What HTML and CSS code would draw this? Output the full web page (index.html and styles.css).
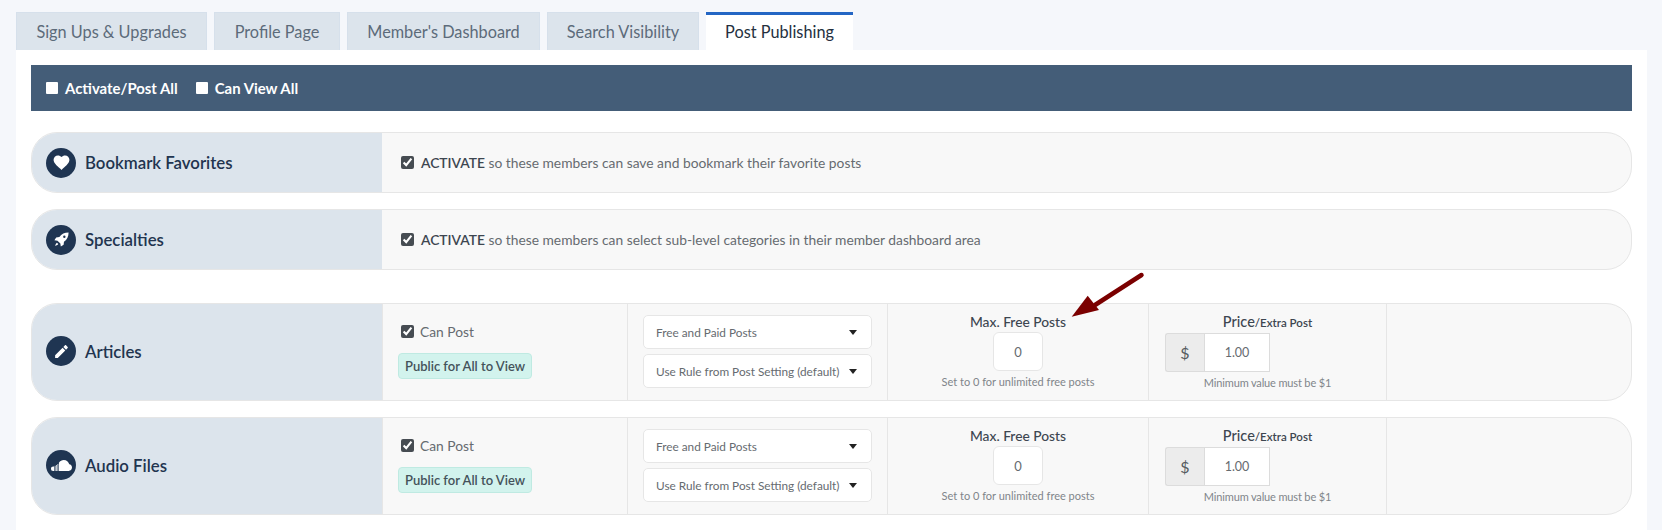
FILE: index.html
```html
<!DOCTYPE html>
<html lang="en">
<head>
<meta charset="utf-8">
<title>Post Publishing</title>
<link rel="stylesheet" href="styles.css">
</head>
<body>
<nav class="tabs">
  <a class="tab">Sign Ups &amp; Upgrades</a>
  <a class="tab">Profile Page</a>
  <a class="tab">Member's Dashboard</a>
  <a class="tab">Search Visibility</a>
  <a class="tab tab-active">Post Publishing</a>
</nav>
<main class="panel">
  <div class="bulk">
    <label class="bulk-item"><input type="checkbox" class="bulk-check">Activate/Post All</label>
    <label class="bulk-item"><input type="checkbox" class="bulk-check">Can View All</label>
  </div>

  <section class="row row-simple">
    <div class="row-head">
      <span class="circle"><svg viewBox="0 0 24 24" class="ico ico-heart"><path d="M12 21.35l-1.45-1.32C5.4 15.36 2 12.28 2 8.5 2 5.42 4.42 3 7.5 3c1.74 0 3.41.81 4.5 2.09C13.09 3.81 14.76 3 16.5 3 19.58 3 22 5.42 22 8.5c0 3.78-3.4 6.86-8.55 11.54L12 21.35z"/></svg></span>
      <h3 class="row-title">Bookmark Favorites</h3>
    </div>
    <label class="activate"><input type="checkbox" class="check" checked><span><b class="activate-word">ACTIVATE</b> so these members can save and bookmark their favorite posts</span></label>
  </section>

  <section class="row row-simple row-last">
    <div class="row-head">
      <span class="circle"><svg viewBox="0 0 24 24" class="ico"><path fill-rule="evenodd" d="M22 2c-5.500 0-10 2-13 6.500L4.500 9 2 13l4.300.6 4.100 4.100.6 4.300 4-2.500.5-4.500C20 12 22 7.500 22 2zM16 6.500a1.700 1.700 0 1 1 0 3.400 1.700 1.700 0 0 1 0-3.400zM5.500 16.500C4 17.500 3.500 19.500 3 21c1.500-.5 3.500-1 4.500-2.500z"/></svg></span>
      <h3 class="row-title">Specialties</h3>
    </div>
    <label class="activate"><input type="checkbox" class="check" checked><span><b class="activate-word">ACTIVATE</b> so these members can select sub-level categories in their member dashboard area</span></label>
  </section>

  <section class="row row-post">
    <div class="row-head">
      <span class="circle"><svg viewBox="0 0 24 24" class="ico"><path d="M3 17.250V21h3.750L17.300 10.450l-3.750-3.750L3 17.250zM20.710 7.040c.39-.39.39-1.020 0-1.410l-2.340-2.340c-.39-.39-1.020-.39-1.410 0l-2.330 2.330 3.750 3.750 2.330-2.330z"/></svg></span>
      <h3 class="row-title">Articles</h3>
    </div>
    <div class="cell cell-post">
      <label class="can-post"><input type="checkbox" class="check" checked>Can Post</label>
      <span class="badge">Public for All to View</span>
    </div>
    <div class="cell cell-selects">
      <div class="select-wrap"><select class="select"><option>Free and Paid Posts</option></select></div>
      <div class="select-wrap"><select class="select"><option>Use Rule from Post Setting (default)</option></select></div>
    </div>
    <div class="cell cell-field">
      <div class="field-label">Max. Free Posts</div>
      <input class="num" value="0">
      <div class="hint">Set to 0 for unlimited free posts</div>
    </div>
    <div class="cell cell-field">
      <div class="field-label field-label-price">Price<small class="field-sub">/Extra Post</small></div>
      <div class="price"><span class="price-addon">$</span><input class="price-input" value="1.00"></div>
      <div class="hint hint-min">Minimum value must be $1</div>
    </div>
    <div class="cell"></div>
  </section>

  <section class="row row-post">
    <div class="row-head">
      <span class="circle"><svg viewBox="0 0 24 24" class="ico ico-cloud"><path d="M3.500 13.500h1v5h-1a2.500 2.500 0 0 1 0-5zM5.200 12.800h.8v5.700h-.8zM6.700 12h.8v6.500h-.8zM8.200 10.900h.8v7.600h-.8zM9.700 9.500C11 7.500 13 6.500 15 6.500c3 0 5.400 2 6 4.800 1.700.2 3 1.700 3 3.500 0 2-1.600 3.700-3.600 3.700H9.700z"/></svg></span>
      <h3 class="row-title">Audio Files</h3>
    </div>
    <div class="cell cell-post">
      <label class="can-post"><input type="checkbox" class="check" checked>Can Post</label>
      <span class="badge">Public for All to View</span>
    </div>
    <div class="cell cell-selects">
      <div class="select-wrap"><select class="select"><option>Free and Paid Posts</option></select></div>
      <div class="select-wrap"><select class="select"><option>Use Rule from Post Setting (default)</option></select></div>
    </div>
    <div class="cell cell-field">
      <div class="field-label">Max. Free Posts</div>
      <input class="num" value="0">
      <div class="hint">Set to 0 for unlimited free posts</div>
    </div>
    <div class="cell cell-field">
      <div class="field-label field-label-price">Price<small class="field-sub">/Extra Post</small></div>
      <div class="price"><span class="price-addon">$</span><input class="price-input" value="1.00"></div>
      <div class="hint hint-min">Minimum value must be $1</div>
    </div>
    <div class="cell"></div>
  </section>
</main>
<svg class="arrow" viewBox="0 0 80 50" width="80" height="50"><path class="arrow-line" d="M72.500 3 L26 33"/><path class="arrow-head" d="M2.700 44.700 L18.700 23.700 L30 38 Z"/></svg>
</body>
</html>
```
FILE: styles.css
```css
* { box-sizing: border-box; }
html, body { margin: 0; padding: 0; }
body {
  background: #f5f7fb;
  font-family: "Lato", "Noto Sans", sans-serif;
  color: #5a5f66;
  padding: 12px 15px 0 16px;
  position: relative;
  height: 530px;
  overflow: hidden;
}
.tabs { display: flex; gap: 7px; height: 38px; }
.tab {
  display: flex; align-items: center; justify-content: center;
  background: #dce4ec;
  border: 1px solid #d6e0eb;
  border-bottom: 0;
  color: #5c6b7a;
  font-size: 16.300px;
  padding: 0 10px;
}
.tab:nth-child(1) { width: 191px; }
.tab:nth-child(2) { width: 126px; }
.tab:nth-child(3) { width: 193px; }
.tab:nth-child(4) { width: 152px; }
.tab-active {
  width: 147px;
  background: #fff;
  border: 0;
  border-top: 3px solid #2466c4;
  color: #24303e;
  padding-bottom: 3px;
}
.panel { background: #fff; padding: 15px 15px 15px; height: 480px; }
.bulk {
  display: flex; align-items: center; gap: 18px;
  background: #445d78;
  height: 46px;
  padding: 0 15px;
}
.bulk-item {
  display: flex; align-items: center;
  color: #fff; font-size: 14.900px; font-weight: 700;
}
.bulk-check {
  appearance: none; margin: 0 7px 0 0;
  width: 12px; height: 12px;
  background: #fff; border-radius: 1px;
}
.row {
  display: grid;
  background: #f8f8f8;
  border: 1px solid #e6e6e6;
  border-radius: 26px;
  overflow: hidden;
  margin-bottom: 16px;
}
.bulk + .row { margin-top: 21px; }
.row-simple { grid-template-columns: 350px 1fr; height: 61px; }
.row-last { margin-bottom: 33px; }
.row-post { grid-template-columns: 350px 245px 260px 261px 238px 1fr; height: 98px; }
.row-post .row-head { padding-bottom: 2px; }
.row-head {
  display: flex; align-items: center; gap: 9px;
  background: #dce4ec;
  padding-left: 15px;
  margin: -1px 0 -1px -1px;
}
.circle {
  display: flex; align-items: center; justify-content: center;
  width: 30px; height: 30px;
  border-radius: 50%;
  background: #1f3552;
  flex: none;
}
.ico { width: 17px; height: 17px; fill: #fff; }
.ico-heart { width: 19px; height: 19px; }
.ico-cloud { width: 22px; height: 22px; }
.row-title { margin: 0; font-size: 16.800px; font-weight: 600; color: #22344f; }
.activate {
  display: flex; align-items: center;
  padding-left: 19px;
  font-size: 13.800px;
  color: #666b70;
}
.activate .check { margin-right: 7px; }
.activate-word { font-weight: 600; color: #3d4650; }
.check {
  margin: 0 6px 0 0; width: 13px; height: 13px;
  accent-color: #464c52;
  flex: none;
}
.cell { border-left: 1px solid #e6e6e6; }
.cell-post { padding: 19px 0 0 15px; display: flex; flex-direction: column; align-items: flex-start; gap: 14px; }
.can-post { display: flex; align-items: center; font-size: 13.800px; color: #666b70; padding-left: 3px; height: 16px; }
.badge {
  background: #d2f3ed;
  border: 1px solid #bfeae2;
  border-radius: 4px;
  padding: 0 6px;
  height: 26px;
  line-height: 24px;
  font-size: 13px;
  font-weight: 600;
  color: #44525a;
}
.cell-selects { padding: 11px 15px 0; display: flex; flex-direction: column; gap: 5px; }
.select-wrap { position: relative; height: 34px; }
.select-wrap::after {
  content: ""; position: absolute;
  right: 15px; top: 15px;
  border-left: 4px solid transparent;
  border-right: 4px solid transparent;
  border-top: 5px solid #222;
  pointer-events: none;
}
.select {
  appearance: none;
  width: 100%; height: 100%;
  background: #fff;
  border: 1px solid #e6e6e6;
  border-radius: 5px;
  padding: 0 12px;
  font: inherit; font-size: 11.800px;
  color: #666b70;
}
.cell-field { display: flex; flex-direction: column; align-items: center; padding-top: 8px; }
.field-label { font-size: 13.800px; font-weight: 500; color: #3d4650; line-height: 19px; margin-bottom: 1px; }
.field-label-price { font-size: 14.500px; }
.field-sub { font-size: 11.500px; font-weight: 600; }
.num {
  width: 50px; height: 39px;
  background: #fff;
  border: 1px solid #e6e6e6;
  border-radius: 6px;
  text-align: center;
  font: inherit; font-size: 13px;
  color: #666b70;
}
.price { display: flex; height: 39px; align-self: flex-start; margin-left: 16px; }
.price-addon {
  width: 39px;
  display: flex; align-items: center; justify-content: center;
  background: #ececec;
  border: 1px solid #dcdcdc;
  border-right: 0;
  border-radius: 3px 0 0 3px;
  font-size: 16px;
  color: #555b60;
}
.price-input {
  width: 66px; height: 39px;
  background: #fff;
  border: 1px solid #dcdcdc;
  text-align: center;
  font: inherit; font-size: 12.500px;
  color: #666b70;
}
.hint { font-size: 11px; color: #80858a; margin-top: 4px; line-height: 14px; }
.hint-min { letter-spacing: -0.150px; }
.arrow { position: absolute; left: 1069px; top: 272px; overflow: visible; }
.arrow-line { stroke: #7b0000; stroke-width: 4.500px; stroke-linecap: round; fill: none; }
.arrow-head { fill: #7b0000; }
```
